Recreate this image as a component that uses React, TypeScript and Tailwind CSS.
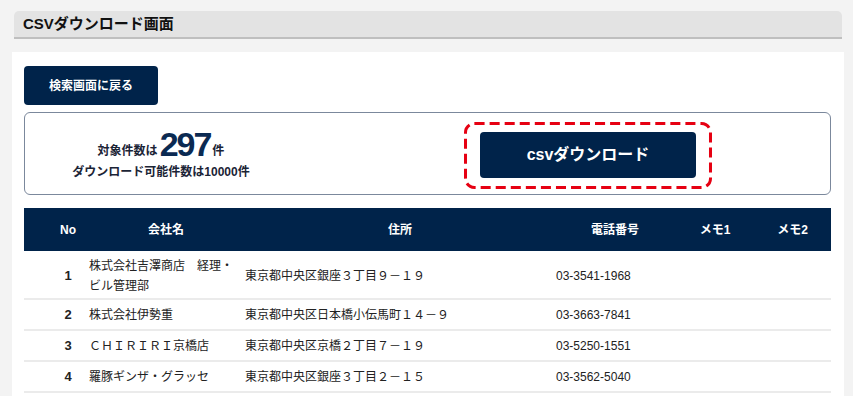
import React from "react";

const font = { fontFamily: '"Liberation Sans", "Noto Sans CJK JP", sans-serif' };

const rows = [
  { no: "1", name: "株式会社吉澤商店　経理・ビル管理部", addr: "東京都中央区銀座３丁目９－１９", tel: "03-3541-1968", tall: true },
  { no: "2", name: "株式会社伊勢重", addr: "東京都中央区日本橋小伝馬町１４－９", tel: "03-3663-7841" },
  { no: "3", name: "ＣＨＩＲＩＲＩ京橋店", addr: "東京都中央区京橋２丁目７－１９", tel: "03-5250-1551" },
  { no: "4", name: "羅豚ギンザ・グラッセ", addr: "東京都中央区銀座３丁目２－１５", tel: "03-3562-5040" },
];

const cols = "grid grid-cols-[60px_156px_310px_130px_70px_81px]";

export default function App() {
  return (
    <div className="h-[396px] bg-[#f3f3f3] pt-[11px] overflow-hidden" style={font}>
      <div className="ml-[14px] w-[828px] h-[28px] bg-[#e3e3e3] rounded-t-[5px] border-b-2 border-[#bfbfbf] flex items-center pl-[9px]">
        <span className="text-[15px] font-bold text-[#111]">CSVダウンロード画面</span>
      </div>
      <div className="mt-[13px] ml-[12px] w-[832px] h-[344px] overflow-hidden bg-white pl-[12px] pr-[13px] pt-[14px]">
        <button className="w-[134px] h-[39px] rounded-[4px] bg-[#00234a] text-white text-[12px] font-bold flex items-center justify-center">
          検索画面に戻る
        </button>
        <div className="mt-[7px] h-[83px] border border-[#7b889c] rounded-[6px] flex items-start">
          <div className="w-[272px] h-full flex flex-col items-center justify-center pt-[1px] text-[#1b2436]">
            <div className="flex items-end leading-none">
              <span className="text-[12px] font-bold mb-[2px]">対象件数は</span>
              <span className="text-[34px] font-bold text-[#0b2a52] tracking-[-2px] mx-[2px] leading-[29px]">297</span>
              <span className="text-[12px] font-bold mb-[2px]">件</span>
            </div>
            <div className="text-[12px] font-bold mt-[7px] leading-none">ダウンロード可能件数は10000件</div>
          </div>
          <div className="relative ml-[167px] mt-[9px] px-[16px] pt-[10px] pb-[11px]">
            <svg className="absolute inset-0 w-full h-full" viewBox="0 0 247 67" preserveAspectRatio="none">
              <rect x="1.5" y="1.5" width="244" height="64" rx="9" ry="9" fill="none" stroke="#e60012" strokeWidth="3" strokeDasharray="10 5" />
            </svg>
            <button className="relative w-[216px] h-[46px] rounded-[4px] bg-[#00234a] text-white text-[16px] font-bold flex items-center justify-center">
              csvダウンロード
            </button>
          </div>
        </div>
        <div className="mt-[13px]">
          <div className={`${cols} h-[43px] bg-[#00234a] text-white text-[12px] font-bold items-center`}>
            <div className="pl-[28px] text-center">No</div>
            <div className="text-center pl-[8px]">会社名</div>
            <div className="text-center pl-[10px]">住所</div>
            <div className="text-center">電話番号</div>
            <div className="text-center">メモ1</div>
            <div className="text-center pl-[4px]">メモ2</div>
          </div>
          {rows.map((r) => (
            <div
              key={r.no}
              className={`${cols} ${r.tall ? "h-[49px] pt-[2px]" : "h-[31px]"} border-b-2 border-[#ebebeb] items-center text-[12px] text-[#222]`}
            >
              <div className="pl-[28px] text-center font-bold text-[13px]">{r.no}</div>
              <div className="pl-[5px] leading-[20px]">{r.name}</div>
              <div className="pl-[5px]">{r.addr}</div>
              <div className="pl-[6px]">{r.tel}</div>
              <div></div>
              <div></div>
            </div>
          ))}
        </div>
      </div>
    </div>
  );
}
